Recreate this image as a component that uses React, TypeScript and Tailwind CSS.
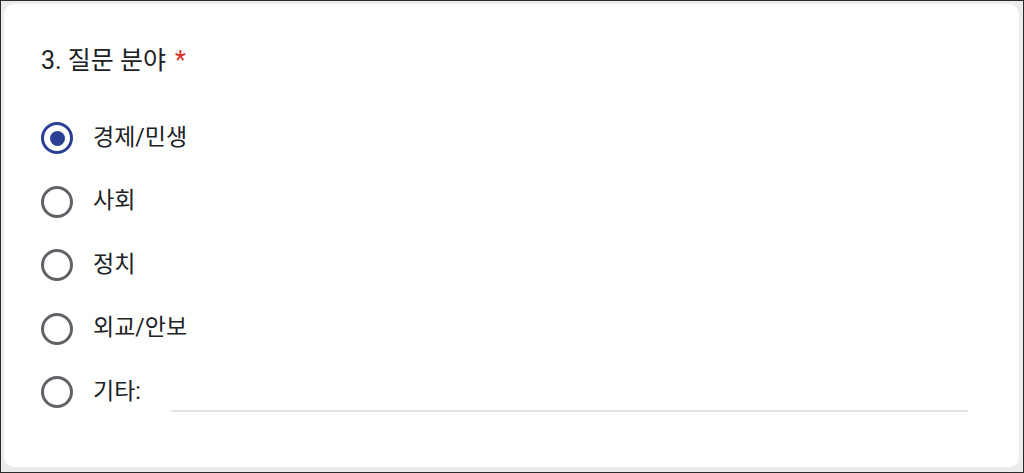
import React, { useState } from 'react';

const options = ['경제/민생', '사회', '정치', '외교/안보'];

function Radio({ checked }: { checked: boolean }) {
  return (
    <span
      className={`flex h-[32px] w-[32px] shrink-0 items-center justify-center rounded-full border-[3px] ${
        checked ? 'border-[#2a3f95]' : 'border-[#5f6368]'
      }`}
    >
      {checked && <span className="h-[15px] w-[15px] rounded-full bg-[#2a3f95]" />}
    </span>
  );
}

export default function App() {
  const [selected, setSelected] = useState('경제/민생');

  return (
    <div
      className="h-[473px] w-[1024px] border border-[#2a2a2a] bg-[#ebebed] pb-[5px] pl-[3px] pr-[4px] pt-[3px] text-[#202124]"
      style={{ fontFamily: 'Roboto, "Noto Sans CJK KR", sans-serif' }}
    >
      <div className="h-full rounded-[10px] bg-white pl-[37px] pt-[40px]">
        {/* Question title */}
        <h2 className="flex items-center text-[25px] leading-[34px]">
          3. 질문 분야
          <span className="ml-[9px] text-[#d93025]">*</span>
        </h2>

        {/* Options */}
        <div className="mt-[44px] flex flex-col gap-[31.5px]">
          {options.map((opt) => (
            <label
              key={opt}
              className="flex h-[32px] cursor-pointer items-center gap-[20px] text-[23px]"
              onClick={() => setSelected(opt)}
            >
              <Radio checked={selected === opt} />
              <span>{opt}</span>
            </label>
          ))}
          <label className="flex h-[32px] cursor-pointer items-center gap-[20px] text-[23px]" onClick={() => setSelected('기타')}>
            <Radio checked={selected === '기타'} />
            <span>기타:</span>
            <span className="ml-[10px] mt-[38px] h-[2px] w-[797px] bg-[#e3e3e3]" />
          </label>
        </div>
      </div>
    </div>
  );
}
